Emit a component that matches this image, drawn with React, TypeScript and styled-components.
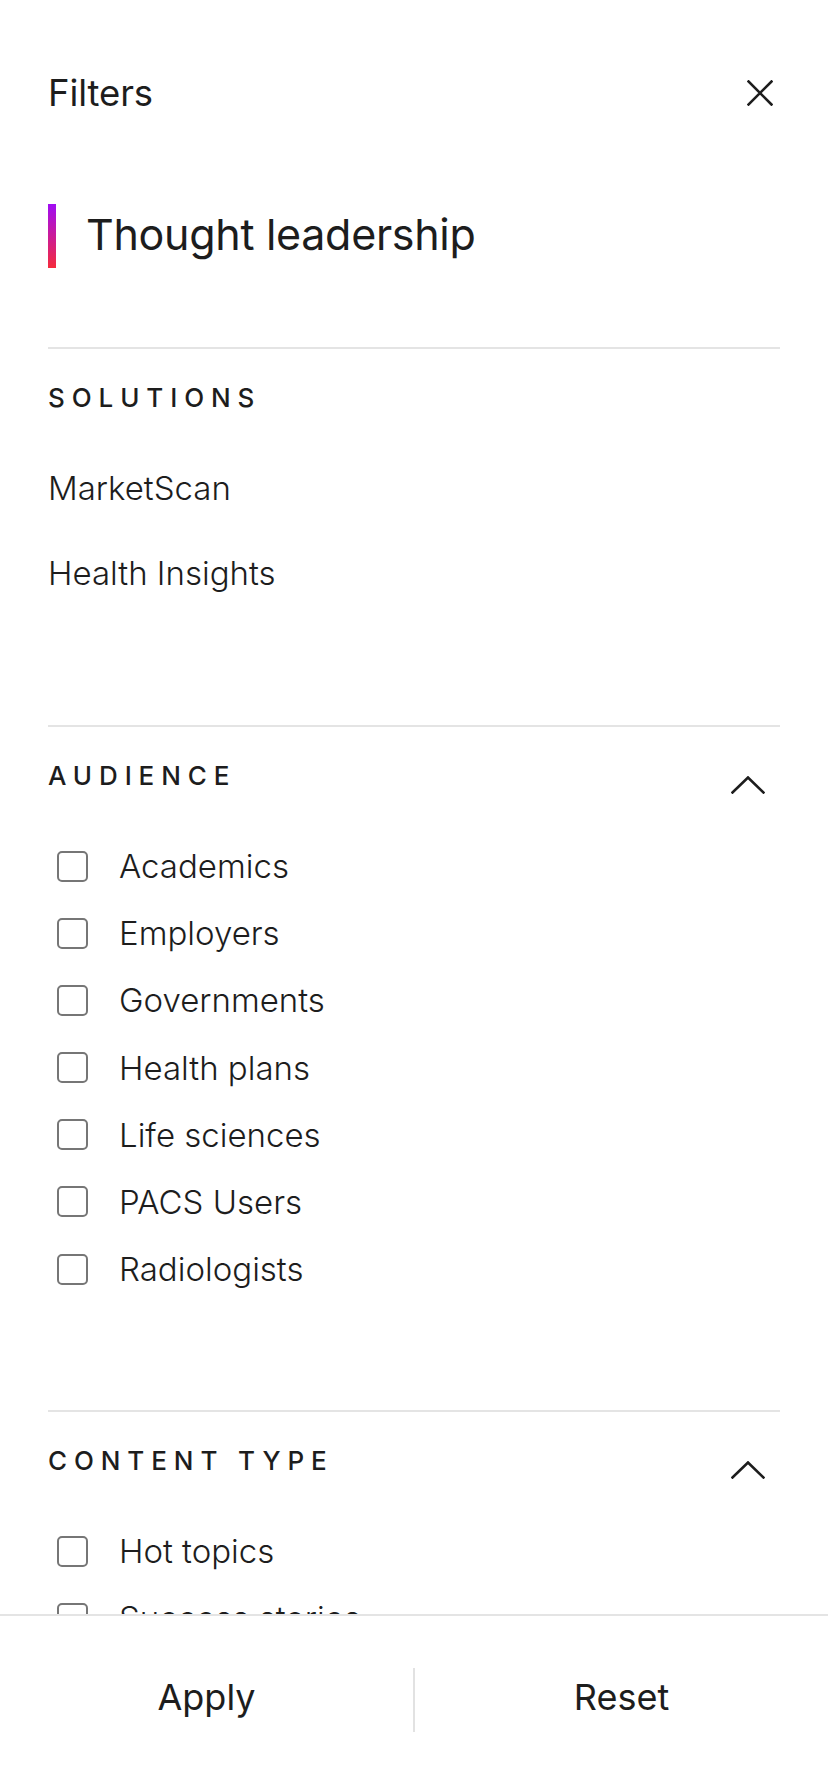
import React from "react";
import styled, { createGlobalStyle } from "styled-components";

const GlobalStyle = createGlobalStyle`
  html, body {
    margin: 0;
    padding: 0;
    background: #ffffff;
  }
  body {
    font-family: Inter, "Noto Sans", "Liberation Sans", sans-serif;
    color: #1d1d1d;
    -webkit-font-smoothing: antialiased;
  }
  * { box-sizing: border-box; }
`;

const Page = styled.div`
  height: 100vh;
  display: flex;
  flex-direction: column;
  background: #fff;
`;

const Scroll = styled.div`
  flex: 1;
  overflow: hidden;
  padding: 0 48px;
`;

const Header = styled.header`
  display: flex;
  align-items: center;
  justify-content: space-between;
  padding-top: 73px;
  height: 113px;
`;

const HeaderTitle = styled.h1`
  margin: 0;
  font-size: 36.5px;
  line-height: 40px;
  font-weight: 400;
  color: #1d1d1d;
  letter-spacing: -0.1px;
`;

const CloseButton = styled.button`
  width: 40px;
  height: 40px;
  border: 0;
  padding: 0;
  background: transparent;
  display: flex;
  align-items: center;
  justify-content: center;
  cursor: pointer;
`;

const TitleRow = styled.div`
  display: flex;
  align-items: center;
  gap: 30px;
  margin-top: 91px;
  height: 64px;
`;

const AccentBar = styled.span`
  width: 8px;
  height: 64px;
  background: linear-gradient(180deg, #a00cf4 0%, #f52b3c 100%);
  flex-shrink: 0;
`;

const PageTitle = styled.h2`
  margin: 0;
  padding-bottom: 4px;
  font-size: 43px;
  line-height: 56px;
  font-weight: 400;
  color: #1d1d1d;
  letter-spacing: -0.3px;
`;

const Section = styled.section<{ $first?: boolean; $bottom: number }>`
  border-top: 2px solid #e4e4e4;
  margin-top: ${(p) => (p.$first ? "79px" : "0")};
  padding-top: 33px;
  padding-bottom: ${(p) => p.$bottom}px;
`;

const SectionHeader = styled.div`
  display: flex;
  align-items: flex-start;
  justify-content: space-between;
`;

const SectionTitle = styled.h3`
  margin: 0;
  font-size: 26px;
  line-height: 32px;
  font-weight: 500;
  letter-spacing: 6.9px;
  text-transform: uppercase;
  color: #1d1d1d;
`;

const ChevronWrap = styled.span`
  display: block;
  margin-top: 16px;
  margin-right: 15px;
  height: 18px;
`;

const LinkList = styled.ul`
  list-style: none;
  margin: 54px 0 0;
  padding: 0;
  display: flex;
  flex-direction: column;
  gap: 45px;
`;

const LinkItem = styled.li`
  font-size: 33px;
  line-height: 40px;
  font-weight: 300;
  color: #1d1d1d;
`;

const CheckList = styled.ul`
  list-style: none;
  margin: 52px 0 0;
  padding: 0 0 0 9px;
  display: flex;
  flex-direction: column;
  gap: 27.2px;
`;

const CheckRow = styled.li`
  display: flex;
  align-items: center;
  gap: 31px;
  height: 40px;
`;

const Box = styled.span`
  width: 31px;
  height: 31px;
  border: 2px solid #767676;
  border-radius: 5px;
  flex-shrink: 0;
  background: #fff;
`;

const CheckLabel = styled.span`
  font-size: 33px;
  line-height: 40px;
  font-weight: 300;
  color: #1d1d1d;
`;

const Footer = styled.footer`
  flex-shrink: 0;
  border-top: 2px solid #e4e4e4;
  padding: 52px 0 60px;
  display: flex;
  background: #fff;
`;

const FooterButton = styled.button<{ $divider?: boolean }>`
  flex: 1;
  height: 64px;
  border: 0;
  border-right: ${(p) => (p.$divider ? "2px solid #e2e2e2" : "0")};
  background: transparent;
  font-family: Inter, "Noto Sans", "Liberation Sans", sans-serif;
  font-size: 36px;
  line-height: 40px;
  font-weight: 400;
  color: #1d1d1d;
  padding: 0 0 6px;
  cursor: pointer;
`;

const CloseIcon = () => (
  <svg width="26" height="26" viewBox="0 0 26 26" fill="none">
    <path d="M1.5 1.5 L24.5 24.5 M24.5 1.5 L1.5 24.5" stroke="#1d1d1d" strokeWidth="2.6" strokeLinecap="square" />
  </svg>
);

const ChevronUp = () => (
  <svg width="34" height="18" viewBox="0 0 34 18" fill="none">
    <path d="M1.5 16.5 L17 1.5 L32.5 16.5" stroke="#1d1d1d" strokeWidth="2.6" strokeLinecap="square" />
  </svg>
);

const audiences = [
  "Academics",
  "Employers",
  "Governments",
  "Health plans",
  "Life sciences",
  "PACS Users",
  "Radiologists",
];

const contentTypes = ["Hot topics", "Success stories", "Reports", "Webinars"];

const Checks = ({ items }: { items: string[] }) => (
  <CheckList>
    {items.map((item) => (
      <CheckRow key={item}>
        <Box />
        <CheckLabel>{item}</CheckLabel>
      </CheckRow>
    ))}
  </CheckList>
);

export default function App() {
  return (
    <Page>
      <GlobalStyle />
      <Scroll>
        <Header>
          <HeaderTitle>Filters</HeaderTitle>
          <CloseButton aria-label="Close">
            <CloseIcon />
          </CloseButton>
        </Header>
        <TitleRow>
          <AccentBar />
          <PageTitle>Thought leadership</PageTitle>
        </TitleRow>

        <Section $first $bottom={132}>
          <SectionHeader>
            <SectionTitle>Solutions</SectionTitle>
          </SectionHeader>
          <LinkList>
            <LinkItem>MarketScan</LinkItem>
            <LinkItem>Health Insights</LinkItem>
          </LinkList>
        </Section>

        <Section $bottom={121}>
          <SectionHeader>
            <SectionTitle>Audience</SectionTitle>
            <ChevronWrap>
              <ChevronUp />
            </ChevronWrap>
          </SectionHeader>
          <Checks items={audiences} />
        </Section>

        <Section $bottom={118}>
          <SectionHeader>
            <SectionTitle>Content type</SectionTitle>
            <ChevronWrap>
              <ChevronUp />
            </ChevronWrap>
          </SectionHeader>
          <Checks items={contentTypes} />
        </Section>
      </Scroll>
      <Footer>
        <FooterButton $divider>Apply</FooterButton>
        <FooterButton>Reset</FooterButton>
      </Footer>
    </Page>
  );
}
